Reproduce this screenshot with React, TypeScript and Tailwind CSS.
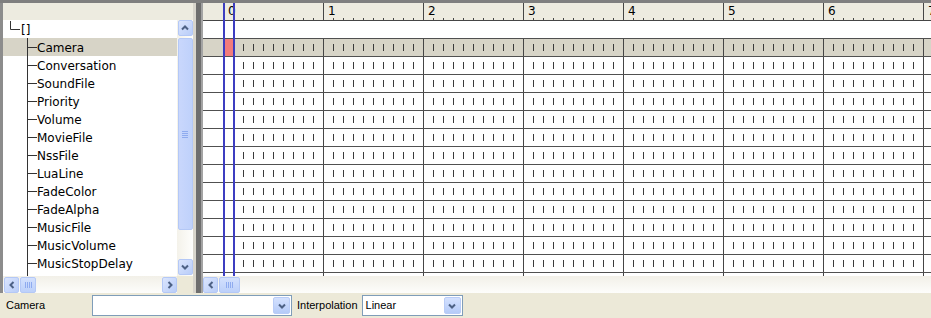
import React from 'react';

const treeItems = [
  'Camera',
  'Conversation',
  'SoundFile',
  'Priority',
  'Volume',
  'MovieFile',
  'NssFile',
  'LuaLine',
  'FadeColor',
  'FadeAlpha',
  'MusicFile',
  'MusicVolume',
  'MusicStopDelay',
];

const cells = [0, 1, 2, 3, 4, 5, 6, 7];
const minor = [10, 20, 30, 40, 50, 60, 70, 80, 90];

const Chevron = ({ dir }: { dir: 'up' | 'down' | 'left' | 'right' }) => {
  const d = {
    up: 'M2 6.5 L5 3.5 L8 6.5',
    down: 'M2 3.5 L5 6.5 L8 3.5',
    left: 'M6.5 2 L3.5 5 L6.5 8',
    right: 'M3.5 2 L6.5 5 L3.5 8',
  }[dir];
  return (
    <svg width="10" height="10" viewBox="0 0 10 10">
      <path d={d} fill="none" stroke="#4d6185" strokeWidth="2" />
    </svg>
  );
};

const ScrollBtn = ({ dir }: { dir: 'up' | 'down' | 'left' | 'right' }) => (
  <div className="w-[15px] h-[16px] shrink-0 rounded-[2px] border border-[#b4c8f6] bg-gradient-to-br from-[#dbe5fd] to-[#b9cdf8] flex items-center justify-center">
    <Chevron dir={dir} />
  </div>
);

const HThumb = ({ w }: { w: string }) => (
  <div className={`${w} h-[16px] shrink-0 rounded-[2px] border border-[#b4c8f6] bg-gradient-to-b from-[#d3e0fd] to-[#bcd0fa] flex items-center justify-center`}>
    <div className="flex gap-[1px]">
      {[0, 1, 2, 3].map((i) => (
        <div key={i} className="w-[1px] h-[6px] bg-[#8fabef]" />
      ))}
    </div>
  </div>
);

const TickCell = ({ first, red }: { first?: boolean; red?: boolean }) => (
  <div className="w-[100px] shrink-0 h-full border-l border-[#454545]">
    <svg width="99" height="17" viewBox="0 0 99 17" className="block">
      {red && <rect x="0" y="0" width="9" height="17" fill="#f27c7c" />}
      {minor
        .filter((m) => !first || m > 10)
        .map((m) => (
          <line key={m} x1={m - 0.5} y1="5" x2={m - 0.5} y2="12" stroke="#3a3a3a" strokeWidth="1" />
        ))}
    </svg>
  </div>
);

const Combo = ({ w, text }: { w: string; text?: string }) => (
  <div className={`${w} h-[21px] border border-[#7f9db9] bg-white flex items-center justify-between pl-[3px] pr-[1px]`}>
    <span className="text-black">{text}</span>
    <div className="w-[17px] h-[17px] rounded-[2px] border border-[#b9ccf7] bg-gradient-to-b from-[#d4e1fe] to-[#b5cbf8] flex items-center justify-center">
      <Chevron dir="down" />
    </div>
  </div>
);

export default function App() {
  return (
    <div className="w-[931px] h-[318px] overflow-hidden bg-[#ece9d8] flex flex-col">
      {/* top area */}
      <div className="h-[293px] flex border-t-[3px] border-[#7f7f7f] shrink-0">
        {/* left panel */}
        <div className="w-[193px] shrink-0 flex flex-col border-l-[3px] border-[#8c8c8c] font-['DejaVu_Sans',sans-serif] text-[12px] text-black">
          <div className="h-[17px] bg-[#edebe0]" />
          <div className="h-[256px] flex bg-white">
            <div className="w-[174px] flex flex-col overflow-hidden">
              <div className="h-[18px] flex items-center shrink-0">
                <svg width="18" height="18" className="block shrink-0">
                  <path d="M7.5 1 V9.5 H17" fill="none" stroke="#333" strokeWidth="1" />
                </svg>
                <span className="leading-[18px] pt-[1px]">[]</span>
              </div>
              {treeItems.map((name, i) => (
                <div key={name} className={`h-[18px] flex items-center shrink-0 ${i === 0 ? 'bg-[#d7d4c7]' : ''}`}>
                  <svg width="34" height="18" className="block shrink-0">
                    <path d="M24.5 0 V18 M24.5 9.5 H34" fill="none" stroke="#333" strokeWidth="1" />
                  </svg>
                  <span className="leading-[18px] pt-[1px]">{name}</span>
                </div>
              ))}
              <div className="flex-1">
                <svg width="34" height="4" className="block">
                  <path d="M24.5 0 V4" fill="none" stroke="#333" strokeWidth="1" />
                </svg>
              </div>
            </div>
            {/* vertical scrollbar */}
            <div className="w-[16px] flex flex-col items-center bg-gradient-to-r from-[#f4f2ea] to-[#fefefc]">
              <ScrollBtn dir="up" />
              <div className="mt-[2px] w-[15px] h-[192px] rounded-[2px] border border-[#b4c8f6] bg-gradient-to-r from-[#c9d7fc] to-[#bfd1fb] flex items-center justify-center">
                <div className="flex flex-col gap-[1px]">
                  {[0, 1, 2, 3].map((i) => (
                    <div key={i} className="w-[6px] h-[1px] bg-[#8fabef]" />
                  ))}
                </div>
              </div>
              <div className="flex-1" />
              <div className="mb-[1px]">
                <ScrollBtn dir="down" />
              </div>
            </div>
          </div>
          {/* horizontal scrollbar */}
          <div className="h-[17px] flex">
            <div className="w-[174px] flex items-center gap-[1px] pl-[1px] bg-gradient-to-b from-[#f2f0e8] to-[#fdfdfb]">
              <ScrollBtn dir="left" />
              <HThumb w="w-[16px]" />
              <div className="flex-1" />
              <ScrollBtn dir="right" />
            </div>
            <div className="flex-1 bg-[#ece9d8]" />
          </div>
        </div>

        {/* splitter */}
        <div className="w-[3px] bg-[#d8d5cc] shrink-0" />
        <div className="w-[5px] bg-[#6e6e6e] shrink-0" />
        <div className="w-[2px] bg-[#a3a3a3] shrink-0" />

        {/* timeline */}
        <div className="relative flex-1 overflow-hidden flex flex-col font-['DejaVu_Sans',sans-serif] text-[12px] text-black">
          {/* ruler */}
          <div className="h-[18px] shrink-0 flex bg-[#edebe0] border-b border-[#454545]">
            <div className="w-[20px] shrink-0" />
            {cells.map((c) => (
              <div key={c} className="w-[100px] shrink-0 border-l border-[#454545] flex flex-col">
                <div className="flex-1 pl-[4px] pt-[1px] leading-[14px]">{c}</div>
                <svg width="99" height="3" className="block">
                  {minor.map((m) => (
                    <line key={m} x1={m - 0.5} y1="0" x2={m - 0.5} y2="3" stroke="#454545" strokeWidth="1" />
                  ))}
                </svg>
              </div>
            ))}
          </div>
          {/* root row */}
          <div className="h-[18px] shrink-0 bg-white border-b border-[#505050]" />
          {treeItems.map((name, i) => (
            <div key={name} className={`h-[18px] shrink-0 flex border-b border-[#505050] ${i === 0 ? 'bg-[#d7d4c7]' : 'bg-white'}`}>
              <div className="w-[20px] shrink-0" />
              {cells.map((c) => (
                <TickCell key={c} first={c === 0} red={c === 0 && i === 0} />
              ))}
            </div>
          ))}
          <div className="flex-1 flex bg-white">
            <div className="w-[20px] shrink-0" />
            {cells.map((c) => (
              <div key={c} className="w-[100px] shrink-0 border-l border-[#454545]" />
            ))}
          </div>
          {/* horizontal scrollbar */}
          <div className="h-[17px] shrink-0 flex items-center gap-[1px] bg-gradient-to-b from-[#f2f0e8] to-[#fdfdfb]">
            <ScrollBtn dir="left" />
            <HThumb w="w-[21px]" />
          </div>

          {/* playhead cursor lines */}
          <div className="absolute left-[20px] top-0 bottom-[17px] w-[2px] bg-[#3d3dc0]" />
          <div className="absolute left-[30px] top-0 bottom-[17px] w-[2px] bg-[#3d3dc0]" />
        </div>
      </div>

      {/* properties bar */}
      <div className="flex-1 flex items-center font-['Liberation_Sans',Arial,sans-serif] text-[11px] text-black">
        <span className="w-[92px] pl-[6px]">Camera</span>
        <Combo w="w-[200px]" />
        <span className="ml-[5px] mr-[4px]">Interpolation</span>
        <Combo w="w-[101px]" text="Linear" />
      </div>
    </div>
  );
}
